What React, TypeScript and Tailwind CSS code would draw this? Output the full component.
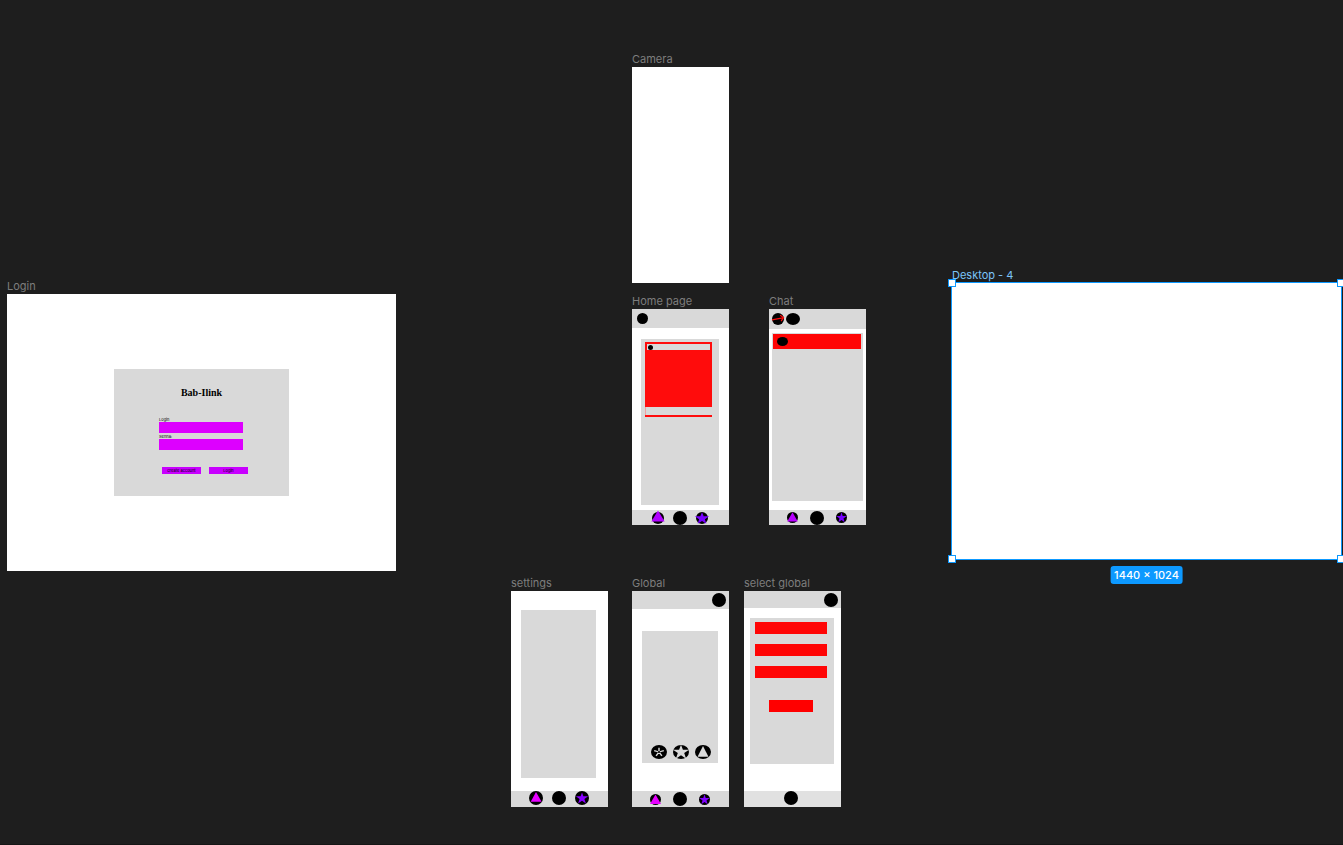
import type { ReactNode } from 'react';

const STAR = '50,3 61,37 97,37 68,59 79,94 50,73 21,94 32,59 3,37 39,37';

type FrameProps = {
  name: string;
  place: string;
  size?: string;
  selected?: boolean;
  children?: ReactNode;
};

function Frame({ name, place, size = 'w-[97px] h-[216px]', selected = false, children }: FrameProps) {
  return (
    <section className={`absolute ${place}`}>
      <h2
        className={`h-4 whitespace-nowrap text-[11px] leading-4 ${
          selected ? 'text-[#7cc4f8]' : 'text-[#7d7d7d]'
        }`}
      >
        {name}
      </h2>
      <div className={`relative flex flex-col bg-white ${size}`}>{children}</div>
    </section>
  );
}

type DotProps = { label: string; size?: string; children?: ReactNode };

function Dot({ label, size = 'size-3.5', children }: DotProps) {
  return (
    <button type="button" aria-label={label} className={`block shrink-0 ${size}`}>
      <svg viewBox="0 0 100 100" preserveAspectRatio="none" className="block size-full overflow-visible">
        <circle cx="50" cy="50" r="50" fill="#000" />
        {children}
      </svg>
    </button>
  );
}

function Login() {
  const field = 'relative block h-[11px] w-[84px] bg-[#dd00ff] px-1 text-[4px] outline-none';
  const label = 'block h-[6px] text-[4px] leading-[8px] text-black';
  const button = 'h-[7px] w-[39px] bg-[#c800ff] text-center text-[4px] leading-[7px] text-black';
  return (
    <div className="flex flex-1 items-center justify-center">
      <form className="flex h-[127px] w-[175px] flex-col bg-[#d9d9d9] pt-[17px]">
        <h1 className="h-[14px] text-center font-['Liberation_Serif',serif] text-[10px] leading-[14px] font-bold text-black">
          Bab-Ilink
        </h1>
        <div className="mt-4 ml-[45px]">
          <label htmlFor="login" className={label}>
            Login
          </label>
          <input id="login" className={field} />
        </div>
        <div className="ml-[45px]">
          <label htmlFor="senha" className={label}>
            Senha:
          </label>
          <input id="senha" type="password" className={field} />
        </div>
        <div className="mt-[17px] ml-12 flex gap-2">
          <button type="button" className={button}>
            create account
          </button>
          <button type="submit" className={button}>
            Login
          </button>
        </div>
      </form>
    </div>
  );
}

function HomePage() {
  return (
    <>
      <header className="flex h-[19px] items-center bg-[#d9d9d9] pl-[5px]">
        <Dot label="Profile" size="size-[11px]" />
      </header>
      <div className="mt-[11px] mb-[5px] ml-[9px] w-[78px] flex-1 bg-[#d9d9d9] px-1 pt-[3px]">
        <article className="w-[67px] bg-[#ff0c0c] py-0.5">
          <div className="mx-0.5 flex h-1.5 items-center bg-[#d9d9d9] pl-px">
            <Dot label="Author" size="size-[5px]" />
          </div>
          <div className="h-[57px]" />
          <div className="border-l border-[#f0a0a0] bg-[#d9d9d9] h-2" />
        </article>
      </div>
      <footer className="flex h-[15px] items-center justify-center gap-[9px] bg-[#d9d9d9] pr-px">
        <Dot label="Camera" size="size-3">
          <polygon points="50,-12 105,80 -5,80" fill="#b000ff" />
        </Dot>
        <Dot label="Home" />
        <Dot label="Favorites" size="size-3">
          <polygon points="50,2 64,36 110,36 74,60 86,97 50,76 14,97 26,60 -10,36 36,36" fill="#7700ff" />
        </Dot>
      </footer>
    </>
  );
}

function Chat() {
  return (
    <>
      <header className="flex h-5 items-center gap-0.5 bg-[#d9d9d9] pl-[3px]">
        <Dot label="Back" size="size-3">
          <path d="M0 58 L100 38 M68 18 L96 38 L76 68" fill="none" stroke="#ff0c0c" strokeWidth="10" />
        </Dot>
        <Dot label="Contact" size="w-3.5 h-3" />
      </header>
      <div className="mt-1 mb-[9px] ml-[3px] w-[91px] flex-1 bg-[#d9d9d9] px-px pt-px">
        <div className="flex h-[15px] w-[88px] items-center bg-[#ff0505] pl-1">
          <Dot label="Conversation" size="w-[11px] h-[9px]" />
        </div>
      </div>
      <footer className="flex h-[15px] items-center justify-center gap-3 bg-[#d9d9d9] pr-px">
        <Dot label="Camera" size="size-[11px]">
          <polygon points="50,2 98,86 2,86" fill="#b800ff" />
        </Dot>
        <Dot label="Home" />
        <Dot label="Favorites" size="size-[11px]">
          <polygon points={STAR} fill="#7700ff" />
        </Dot>
      </footer>
    </>
  );
}

function Settings() {
  return (
    <>
      <div className="mt-[19px] mb-[13px] ml-2.5 w-[75px] flex-1 bg-[#d9d9d9]" />
      <footer className="flex h-4 items-start justify-center gap-[9px] bg-[#d9d9d9] pr-px">
        <Dot label="Camera">
          <polygon points="50,8 90,76 12,76" fill="#e600ff" />
        </Dot>
        <Dot label="Home" />
        <Dot label="Favorites">
          <polygon points="50,10 60,38 94,38 67,58 78,90 50,70 22,90 33,58 6,38 40,38" fill="#8800ff" />
        </Dot>
      </footer>
    </>
  );
}

function Global() {
  return (
    <>
      <header className="flex h-[18px] items-center justify-end bg-[#d9d9d9] pr-[3px]">
        <Dot label="Profile" />
      </header>
      <div className="mt-[22px] mb-7 ml-[10px] flex w-[76px] flex-1 items-end justify-center gap-1.5 bg-[#d9d9d9] pb-1 pl-0.5">
        <Dot label="Effects" size="w-4 h-3.5">
          <path
            d="M50 50 V20 M50 50 L20 40 M50 50 L80 40 M50 50 L32 78 M50 50 L68 78"
            stroke="#d9d9d9"
            strokeWidth="9"
          />
          <circle cx="50" cy="50" r="7" fill="#000" />
        </Dot>
        <Dot label="Rate" size="w-4 h-3.5">
          <polygon points="50,-2 62,34 100,34 70,58 82,98 50,74 18,98 30,58 0,34 38,34" fill="#d9d9d9" />
        </Dot>
        <Dot label="Up" size="w-4 h-3.5">
          <polygon points="50,8 84,84 16,84" fill="#d9d9d9" />
        </Dot>
      </div>
      <footer className="flex h-4 items-center justify-center gap-3 bg-[#d9d9d9] pr-0.5">
        <Dot label="Camera" size="size-[11px]">
          <polygon points="50,4 100,92 0,92" fill="#e600ff" />
        </Dot>
        <Dot label="Home" />
        <Dot label="Favorites" size="size-[11px]">
          <polygon points={STAR} fill="#8000ff" />
        </Dot>
      </footer>
    </>
  );
}

function SelectGlobal() {
  return (
    <>
      <header className="flex h-[17px] items-start justify-end bg-[#d9d9d9] pt-0.5 pr-[3px]">
        <Dot label="Profile" />
      </header>
      <div className="mt-[10px] mb-[27px] ml-1.5 flex w-[84px] flex-1 flex-col gap-[10px] bg-[#d9d9d9] pt-1 pl-[5px]">
        <button type="button" aria-label="First option" className="h-3 w-[72px] bg-[#ff0505]" />
        <button type="button" aria-label="Second option" className="h-3 w-[72px] bg-[#ff0505]" />
        <button type="button" aria-label="Third option" className="h-3 w-[72px] bg-[#ff0505]" />
        <button type="button" aria-label="Confirm" className="mt-3 ml-[14px] h-3 w-11 bg-[#ff0000]" />
      </div>
      <footer className="flex h-4 items-start justify-center bg-[#e1e1e1] pr-1">
        <Dot label="Home" />
      </footer>
    </>
  );
}

function Selection() {
  const handle = 'absolute size-2 border border-[#0d99ff] bg-white';
  return (
    <>
      <div className="absolute -inset-px border border-[#0d99ff]">
        <span className={`${handle} -top-1 -left-1`} />
        <span className={`${handle} -top-1 -right-1`} />
        <span className={`${handle} -bottom-1 -left-1`} />
        <span className={`${handle} -right-1 -bottom-1`} />
      </div>
      <div className="absolute top-full left-1/2 mt-[7px] -translate-x-1/2 rounded-[3px] bg-[#0d99ff] px-1 text-[11px] leading-[18px] font-medium whitespace-nowrap text-white">
        1440 × 1024
      </div>
    </>
  );
}

export default function App() {
  return (
    <main className="relative min-h-screen overflow-hidden border-b border-[#161616] bg-[#1e1e1e] font-['Inter',sans-serif]">
      <Frame name="Camera" place="left-[632px] top-[51px]" />
      <Frame name="Login" place="left-[7px] top-[278px]" size="w-[389px] h-[277px]">
        <Login />
      </Frame>
      <Frame name="Home page" place="left-[632px] top-[293px]">
        <HomePage />
      </Frame>
      <Frame name="Chat" place="left-[769px] top-[293px]">
        <Chat />
      </Frame>
      <Frame name="Desktop - 4" place="left-[952px] top-[267px]" size="w-[389px] h-[276px]" selected>
        <Selection />
      </Frame>
      <Frame name="settings" place="left-[511px] top-[575px]">
        <Settings />
      </Frame>
      <Frame name="Global" place="left-[632px] top-[575px]">
        <Global />
      </Frame>
      <Frame name="select global" place="left-[744px] top-[575px]">
        <SelectGlobal />
      </Frame>
    </main>
  );
}
